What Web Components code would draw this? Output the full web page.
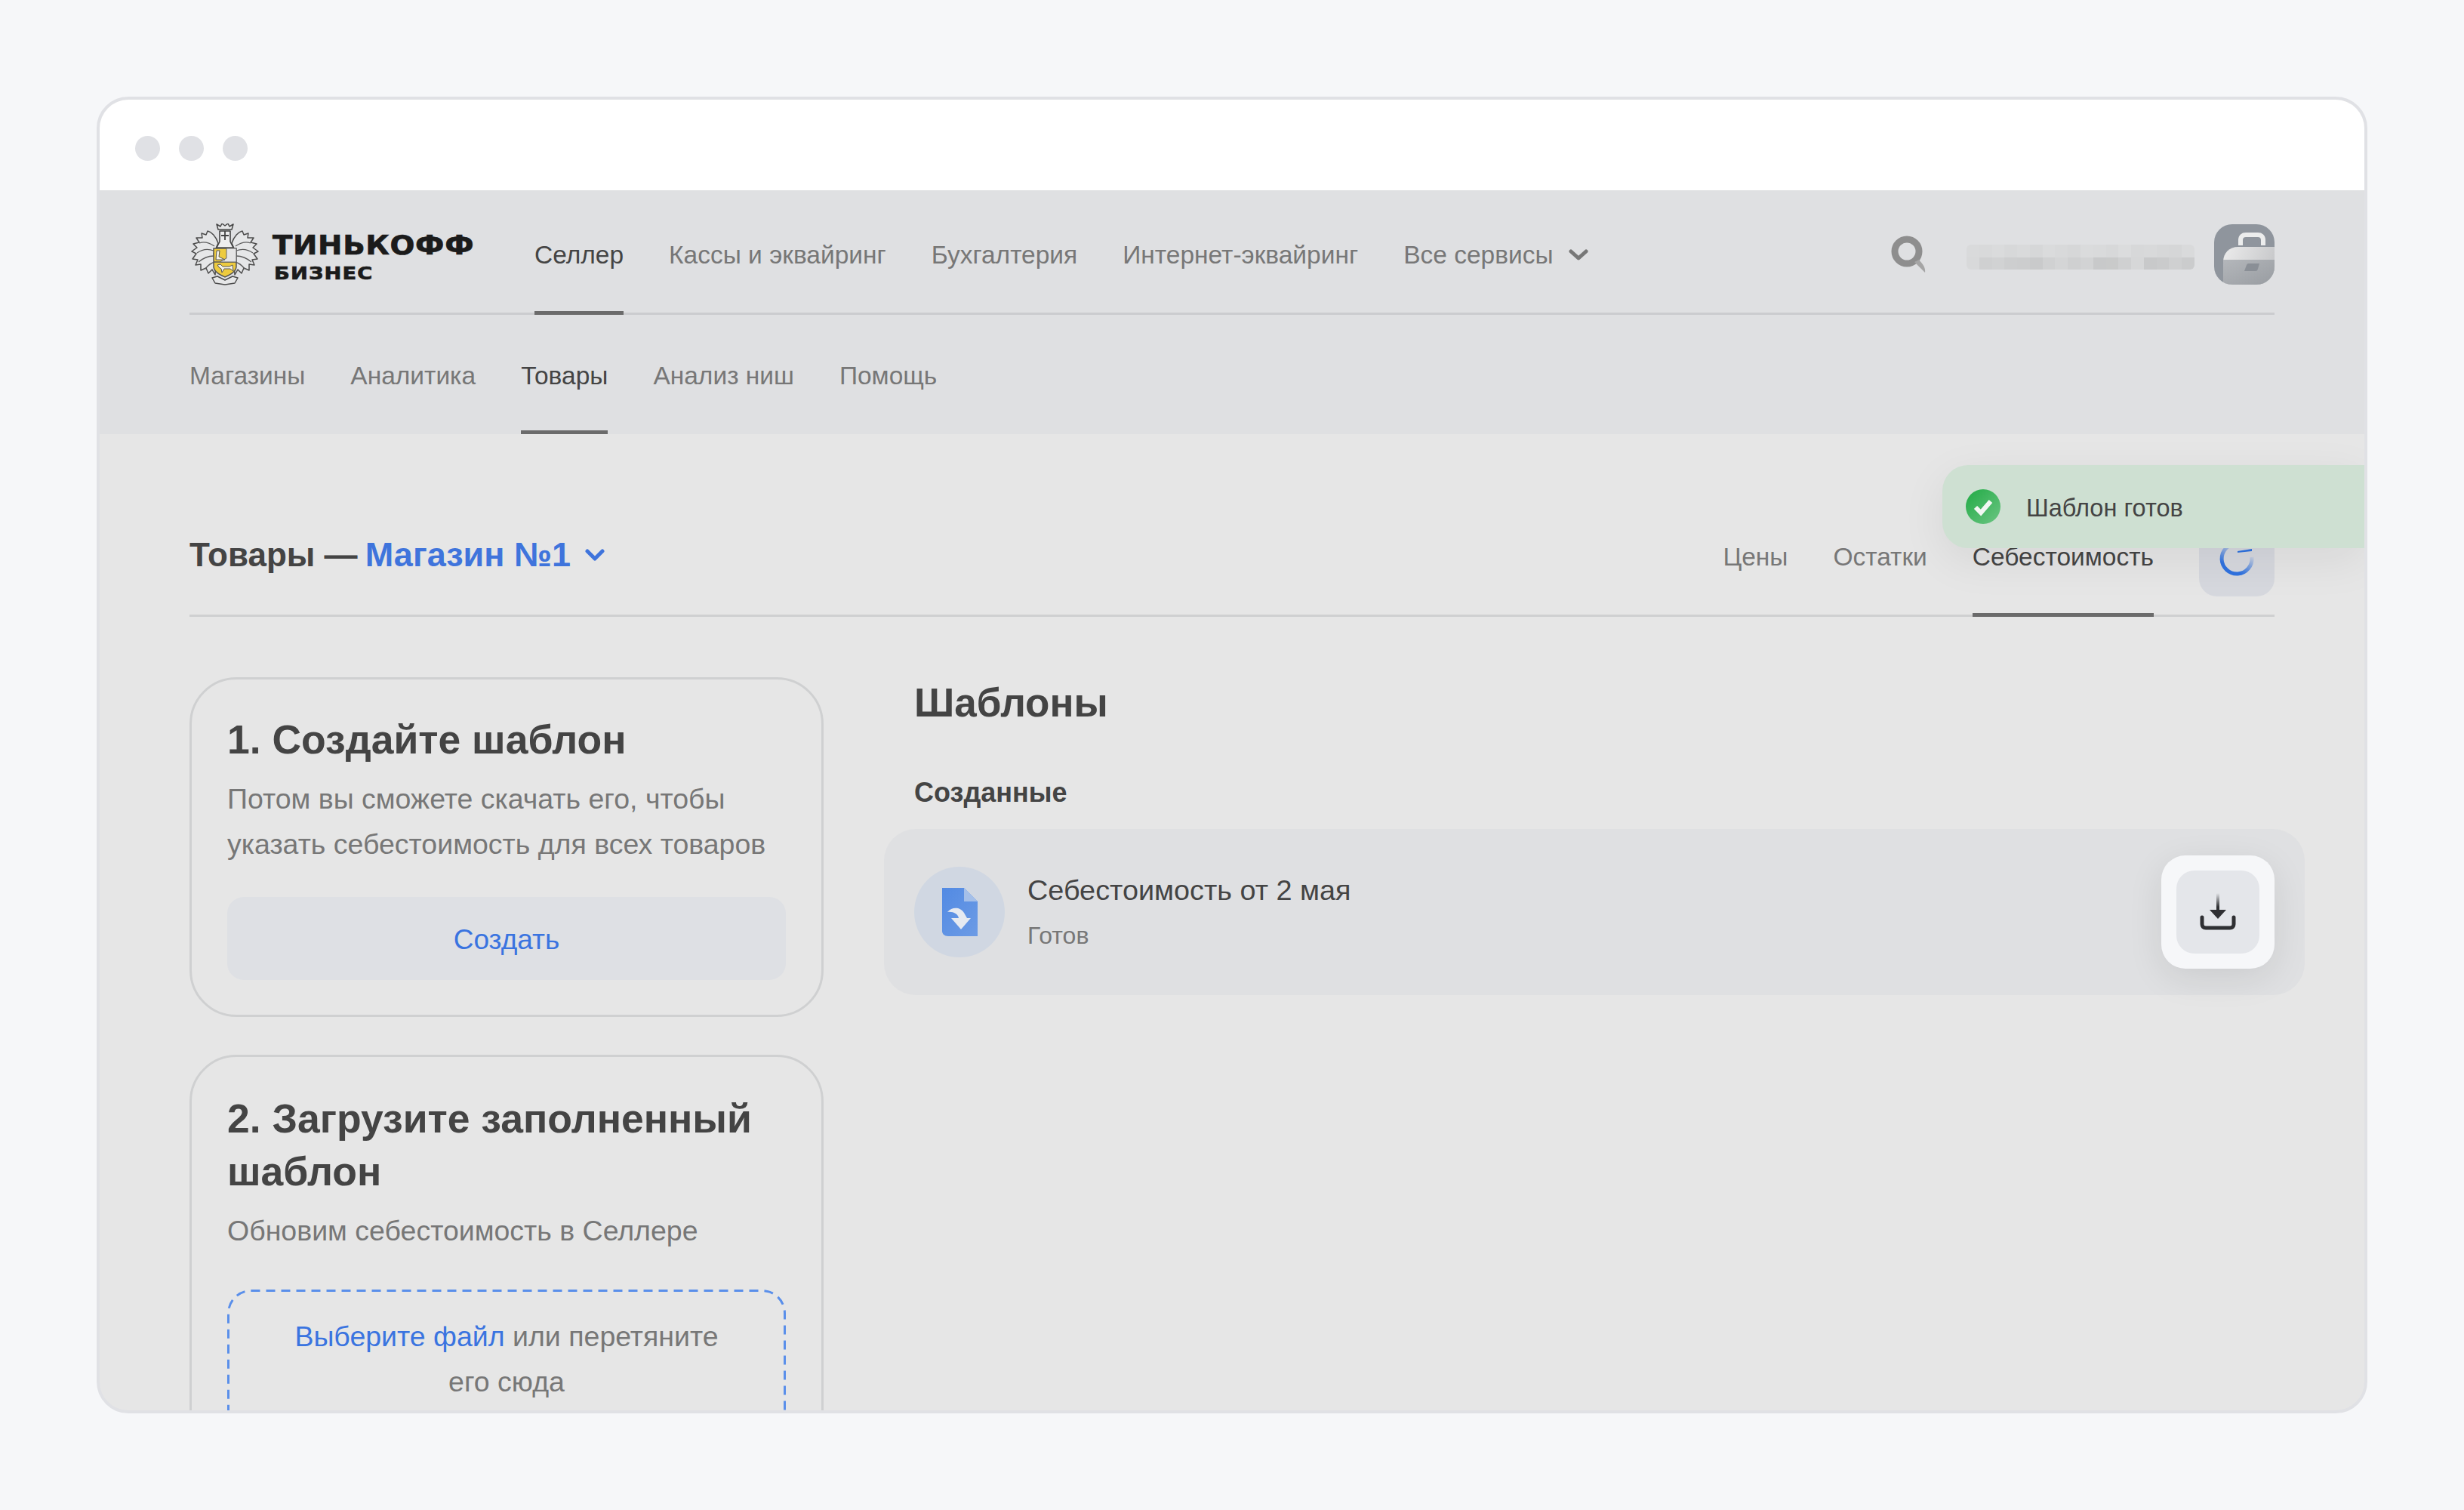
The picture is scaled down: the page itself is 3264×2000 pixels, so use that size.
<!doctype html>
<html lang="ru">
<head>
<meta charset="utf-8">
<title>Шаблоны</title>
<style>
html, body { margin: 0; padding: 0; background: #f6f7f9; }
body { font-family: "Liberation Sans", Arial, sans-serif; }
</style>
</head>
<body>
<browser-frame>
  <seller-header></seller-header>
  <page-content></page-content>
</browser-frame>

<script>
'use strict'

function define(tag, html, setup) {
	customElements.define(tag, class extends HTMLElement {
		constructor() {
			super()
			this.attachShadow({ mode: 'open' }).innerHTML = html
		}
		connectedCallback() {
			if (setup) setup(this)
		}
	})
}

define('browser-frame', `
<style>
:host { display: block; box-sizing: border-box; width: 3008px; height: 1744px; margin: 128px; border: 4px solid #e0e1e5; border-radius: 42px; overflow: hidden; background: #e6e6e6; position: relative; }
.bar { box-sizing: border-box; height: 120px; background: #fff; display: flex; align-items: center; gap: 25px; padding: 8px 0 0 47px; }
.bar i { width: 33px; height: 33px; border-radius: 50%; background: #e0e1e5; }
</style>
<div class="bar"><i></i><i></i><i></i></div>
<slot></slot>`)

define('nav-link', `
<style>
:host { display: block; position: relative; color: #777; font-size: 33.5px; white-space: nowrap; }
:host([active]) { color: #444; }
:host([active])::after { content: ''; position: absolute; left: 0; right: 0; bottom: 0; height: 5px; background: #6b6b6b; }
.in { display: flex; align-items: center; height: 100%; gap: 20px; }
</style>
<div class="in"><slot></slot></div>`)

define('tinkoff-logo', `
<style>
:host { display: flex; align-items: center; gap: 18px; color: #1b1b1b; }
svg { display: block; margin-left: 2px; flex: none; }
.t { display: flex; flex-direction: column; font-family: "DejaVu Sans", sans-serif; font-weight: 700; -webkit-text-stroke: .7px #1b1b1b; margin-top: 6px; }
.a { font-size: 35.5px; line-height: 38px; letter-spacing: .6px; transform: scaleX(1.09); transform-origin: left center; }
.b { font-size: 23.5px; line-height: 26px; letter-spacing: 1px; margin: 5px 0 0 2px; transform: scaleX(1.16); transform-origin: left center; }
</style>
<svg width="90" height="82" viewBox="0 -2 90 82">
  <defs>
    <g id="leaf">
      <path d="M36 24 C33 15 27 9 22 8 L20 13 L14 11 L15 17 L7 17 L11 23 L3 25 L8 30 L1 35 L7 38 L2 45 L9 46 L6 53 L13 52 L13 60 L20 57 L23 64 L28 59 L32 66 L33 50 L30 38 Z" fill="#e6e7e8" stroke="#4c4c4c" stroke-width="1.5" stroke-linejoin="round"/>
      <path d="M31 28 C22 22 16 22 11 24 M30 34 C22 31 15 32 8 37 M30 41 C23 41 16 44 10 49 M32 49 C27 50 22 54 19 58" fill="none" stroke="#5c5c5c" stroke-width="1.3"/>
    </g>
  </defs>
  <use href="#leaf"/>
  <use href="#leaf" transform="translate(90 0) scale(-1 1)"/>
  <path d="M36 6 L34 -1 L39 2 L41 -2 L45 1 L49 -2 L51 2 L56 -1 L54 6 Z" fill="#e6e7e8" stroke="#444" stroke-width="1.5" stroke-linejoin="round"/>
  <path d="M38 8 H52 V22 L56 30 H34 L38 22 Z" fill="#ededee" stroke="#444" stroke-width="1.6" stroke-linejoin="round"/>
  <path d="M45 8 V20 M40 14 H50" stroke="#444" stroke-width="1.8"/>
  <path d="M30 31 H60 V55 C60 62 51 66 45 69 C39 66 30 62 30 55 Z" fill="#edcb3e" stroke="#555" stroke-width="1.5"/>
  <path d="M30 49 H60" stroke="#555" stroke-width="1.4"/>
  <path d="M47 31 H60 V49 H38 L47 44 Z" fill="#e4e4e4" stroke="#666" stroke-width="1"/>
  <path d="M34 34 L38 34 L37 42 L45 46 H33 Z" fill="#f6f3e6" stroke="#555" stroke-width="1"/>
  <path d="M35 53 L39 52 L42 55 H51 L55 53 L56 61 L52 58 H44 L41 63 L40 58 L37 56 Z" fill="#f6f3e6" stroke="#555" stroke-width="1"/>
  <path d="M28 70 L35 68 L45 73 L55 68 L62 70 L58 77 L45 79 L32 77 Z" fill="#e6e7e8" stroke="#4c4c4c" stroke-width="1.5" stroke-linejoin="round"/>
</svg>
<div class="t"><span class="a">ТИНЬКОФФ</span><span class="b">БИЗНЕС</span></div>`)

define('seller-header', `
<style>
:host { display: block; background: #dfe0e2; padding: 0 119px; }
.top { display: flex; align-items: stretch; height: 162px; border-bottom: 3px solid #cbcccf; }
tinkoff-logo { width: 457px; flex: none; padding-top: 8px; box-sizing: border-box; }
.nav { display: flex; gap: 60px; flex: 1; margin-bottom: -3px; }
.nav nav-link { padding-top: 6px; }
.right { display: flex; align-items: center; padding-top: 8px; }
.sub { display: flex; gap: 60px; height: 158px; }
.sub nav-link { padding-top: 4px; box-sizing: border-box; }
.chev { display: block; }
.search { display: block; margin-right: 54px; }
.blur { width: 302px; height: 33px; margin-right: 26px; display: grid; grid-template-columns: repeat(18, 1fr); grid-template-rows: 1fr 1fr; border-radius: 6px; overflow: hidden; margin-top: 7px; }
.blur i { display: block; }
svg.ava { display: block; }
</style>
<div class="top">
  <tinkoff-logo></tinkoff-logo>
  <div class="nav">
    <nav-link active>Селлер</nav-link>
    <nav-link>Кассы и эквайринг</nav-link>
    <nav-link>Бухгалтерия</nav-link>
    <nav-link>Интернет-эквайринг</nav-link>
    <nav-link>Все сервисы
      <svg class="chev" width="26" height="16" viewBox="0 0 26 16"><path d="M3 3 L13 12 L23 3" fill="none" stroke="#777" stroke-width="5" stroke-linecap="round" stroke-linejoin="round"/></svg>
    </nav-link>
  </div>
  <div class="right">
    <svg class="search" width="46" height="50" viewBox="0 0 46 50"><circle cx="21" cy="21" r="16" fill="none" stroke="#8e8e8e" stroke-width="9"/><path d="M31 35 L37 32 C42 38 46 42 45 49 Z" fill="#a5a5a5"/></svg>
    <div class="blur" id="blur"></div>
    <svg class="ava" width="80" height="80" viewBox="0 0 80 80">
      <defs>
        <linearGradient id="ag1" x1="0" y1="0" x2="1" y2="0.3"><stop offset="0" stop-color="#ececec"/><stop offset="1" stop-color="#c8c9cb"/></linearGradient>
        <linearGradient id="ag2" x1="0" y1="0" x2="1" y2="1"><stop offset="0" stop-color="#b4b7bb"/><stop offset="1" stop-color="#989ca1"/></linearGradient>
        <clipPath id="ac"><rect width="80" height="80" rx="24"/></clipPath>
      </defs>
      <g clip-path="url(#ac)">
        <rect width="80" height="80" fill="#8f959d"/>
        <path d="M35 28 V21 C35 16 38 14 42 14 H58 C62 14 65 16 65 21 V28" fill="none" stroke="#eceded" stroke-width="6"/>
        <path d="M43 20 H57 L60 27 H40 Z" fill="#8f959d"/>
        <path d="M12 80 V50 C12 38 20 30 32 30 H80 V80 Z" fill="url(#ag1)"/>
        <path d="M12 47 H80 V80 H12 Z" fill="url(#ag2)"/>
        <path d="M43 54 C44 52 45 52 47 52 H60 L58 59 C57 62 56 62 54 62 H40 Z" fill="#8a8f96"/>
      </g>
    </svg>
  </div>
</div>
<div class="sub">
  <nav-link>Магазины</nav-link>
  <nav-link>Аналитика</nav-link>
  <nav-link active>Товары</nav-link>
  <nav-link>Анализ ниш</nav-link>
  <nav-link>Помощь</nav-link>
</div>`, el => {
	const cols = ['#d9dadb','#d8d9da','#dadbdc','#d7d8d9','#d9dadb','#d6d7d8','#dadbdc','#d8d9da','#d6d7d8','#dadbdc','#d9dadb','#d7d8d9','#dbdcdd','#d7d8d9','#d8d9da','#d6d7d8','#d5d6d7','#d9dadb']
	const low = ['#d8d9da','#cfd0d1','#d1d2d3','#cdcecf','#cccdce','#c9cacb','#d0d1d2','#d4d5d6','#cfd0d1','#d2d3d4','#c8c9ca','#c9caca','#cfd0d1','#d6d7d8','#c8c9ca','#cacbcc','#cfd0d1','#cbcccd']
	const box = el.shadowRoot.getElementById('blur')
	if (box.children.length) return
	cols.concat(low).forEach(c => {
		const i = document.createElement('i')
		i.style.background = c
		box.appendChild(i)
	})
})

define('step-card', `
<style>
:host { display: block; box-sizing: border-box; border: 3px solid #cfd0d1; border-radius: 62px; padding: 45px 47px 47px; color: #444; }
::slotted(h2) { margin: 0 0 13px; font: 700 53.5px/70px "Liberation Sans", Arial, sans-serif; color: #444; }
::slotted(p) { margin: 0; font: 37.5px/60px "Liberation Sans", Arial, sans-serif; color: #777; }
</style>
<slot></slot>`)

define('template-item', `
<style>
:host { display: flex; align-items: center; box-sizing: border-box; height: 220px; padding: 0 40px; background: #dfe0e2; border-radius: 42px; }
.ic { width: 120px; height: 120px; border-radius: 50%; background: #d0d7e2; display: flex; align-items: center; justify-content: center; flex: none; }
.tx { flex: 1; margin-left: 30px; margin-top: -1px; }
.a { font-size: 37.8px; line-height: 44px; color: #444; }
.b { font-size: 32px; line-height: 40px; color: #777; margin-top: 18px; }
.btn { width: 150px; height: 150px; box-sizing: border-box; padding: 20px; border-radius: 32px; background: #f6f7f9; box-shadow: 0 12px 48px rgba(0,0,0,.09); }
.btn div { width: 110px; height: 110px; border-radius: 24px; background: #e4e6ea; display: flex; align-items: center; justify-content: center; }
svg { display: block; }
</style>
<div class="ic">
  <svg width="47" height="65" viewBox="0 0 47 65">
    <defs><linearGradient id="fg" x1="0" y1="0" x2="1" y2="1"><stop offset="0" stop-color="#528ae3"/><stop offset="1" stop-color="#6c9be5"/></linearGradient></defs>
    <path d="M0 0 H29 L47 18 V64 H8 C3 64 0 61 0 57 Z" fill="url(#fg)"/>
    <path d="M29 0 L47 18 H29 Z" fill="#a4bfe9"/>
    <path d="M7 32 C13 25 24 25 29 33 L33 40 H38 L25 55 L12 40 H22 C21 34 14 31 7 32 Z" fill="#e6eaf1"/>
  </svg>
</div>
<div class="tx"><div class="a"><slot name="title"></slot></div><div class="b"><slot name="status"></slot></div></div>
<div class="btn"><div>
  <svg width="48" height="50" viewBox="0 0 48 50">
    <defs><linearGradient id="dg" x1="0" y1="0" x2="0" y2="1"><stop offset="0" stop-color="#2f3033" stop-opacity="0"/><stop offset=".7" stop-color="#2f3033"/></linearGradient></defs>
    <rect x="22" y="0" width="4" height="26" fill="url(#dg)"/>
    <path d="M13 22 H35 L24 34 Z" fill="#2f3033"/>
    <path d="M3 32 V41 C3 44 5 46 8 46 H40 C43 46 45 44 45 41 V32" fill="none" stroke="#2f3033" stroke-width="5" stroke-linecap="round"/>
  </svg>
</div></div>`)

define('toast-note', `
<style>
:host { position: absolute; top: 484px; right: 0; width: 559px; height: 110px; box-sizing: border-box; background: #cee0d2; border-radius: 34px 0 0 34px; box-shadow: 0 16px 60px rgba(0,0,0,.07); display: flex; align-items: center; padding-left: 31px; gap: 34px; font-size: 32.5px; color: #444; }
svg { display: block; flex: none; }
.t { padding-top: 4px; }
</style>
<svg width="46" height="46" viewBox="0 0 46 46">
  <defs><linearGradient id="tg" x1="0" y1="0" x2="1" y2="1"><stop offset="0" stop-color="#21ab45"/><stop offset="1" stop-color="#6cc583"/></linearGradient></defs>
  <circle cx="23" cy="23" r="23" fill="url(#tg)"/>
  <path d="M13 24 L20 31 L33 16" fill="none" stroke="#f3f7f3" stroke-width="6"/>
</svg>
<div class="t"><slot></slot></div>`)

define('page-content', `
<style>
:host { display: block; padding: 0 119px; height: 1300px; color: #444; }
.head { display: flex; height: 242px; border-bottom: 3px solid #cfd0d1; align-items: stretch; box-sizing: border-box; }
.title { flex: 1; display: flex; align-items: center; gap: 19px; font-size: 44px; font-weight: 700; padding-top: 81px; color: #444; }
.title b { color: #3f74dc; font-size: 45px; margin-left: -2px; }
.tabs { display: flex; gap: 60px; margin-bottom: -3px; }
.tabs nav-link { padding-top: 84px; box-sizing: border-box; }
.refresh { width: 100px; height: 100px; background: #d6d8de; border-radius: 24px; align-self: flex-end; margin: 0 0 24px 60px; display: flex; align-items: center; justify-content: center; }
svg { display: block; }
.cols { display: flex; align-items: flex-start; }
.left { width: 840px; flex: none; display: flex; flex-direction: column; gap: 50px; margin-top: 80px; }
.make { height: 450px; }
.fill { padding-top: 47px; }
.right { flex: 1; margin: 80px -40px 0 80px; }
h1 { margin: 0; font-size: 53px; line-height: 68px; font-weight: 700; padding-left: 40px; color: #444; }
h3 { margin: 61px 0 24px; font-size: 36px; line-height: 48px; font-weight: 700; padding-left: 40px; color: #444; }
.btn { margin-top: 40px; height: 110px; padding-top: 4px; box-sizing: border-box; background: #dee0e4; border-radius: 22px; display: flex; align-items: center; justify-content: center; color: #3a74e0; font-size: 37px; }
.drop { position: relative; margin-top: 48px; border-radius: 32px; padding: 32px 20px 80px; text-align: center; font-size: 37.5px; line-height: 60px; color: #777; }
.drop span { color: #3a74e0; }
.drop svg { position: absolute; left: 0; top: 0; width: 100%; height: 100%; overflow: visible; }
.drop rect { x: 1.5px; y: 1.5px; width: calc(100% - 3px); height: calc(100% - 3px); rx: 30px; fill: none; stroke: #5a8fea; stroke-width: 3px; stroke-dasharray: 12 8; }
</style>
<div class="head">
  <div class="title">
    <span>Товары — <b>Магазин №1</b></span>
    <svg width="26" height="18" viewBox="0 0 26 18"><path d="M3 4 L13 14 L23 4" fill="none" stroke="#3f74dc" stroke-width="5" stroke-linecap="round" stroke-linejoin="round"/></svg>
  </div>
  <div class="tabs">
    <nav-link>Цены</nav-link>
    <nav-link>Остатки</nav-link>
    <nav-link active>Себестоимость</nav-link>
  </div>
  <div class="refresh">
    <svg width="48" height="48" viewBox="0 0 48 48"><defs><linearGradient id="sg" gradientUnits="userSpaceOnUse" x1="30" y1="44" x2="44" y2="20"><stop offset="0" stop-color="#2f72e0"/><stop offset="1" stop-color="#2f72e0" stop-opacity=".05"/></linearGradient></defs><path d="M24 4 A20 20 0 1 0 44 22" fill="none" stroke="url(#sg)" stroke-width="5"/><path d="M25 14 L44 11 V14 L25 16 Z" fill="#2f72e0"/></svg>
  </div>
</div>
<div class="cols">
  <div class="left">
    <step-card class="make">
      <h2>1. Создайте шаблон</h2>
      <p>Потом вы сможете скачать его, чтобы указать себестоимость для всех товаров</p>
      <div class="btn">Создать</div>
    </step-card>
    <step-card class="fill">
      <h2>2. Загрузите заполненный шаблон</h2>
      <p>Обновим себестоимость в Селлере</p>
      <div class="drop"><svg><rect/></svg><div><span>Выберите файл</span> или перетяните</div><div>его сюда</div></div>
    </step-card>
  </div>
  <div class="right">
    <h1>Шаблоны</h1>
    <h3>Созданные</h3>
    <template-item>
      <span slot="title">Себестоимость от 2 мая</span>
      <span slot="status">Готов</span>
    </template-item>
  </div>
</div>
<toast-note>Шаблон готов</toast-note>`)
</script>
</body>
</html>
